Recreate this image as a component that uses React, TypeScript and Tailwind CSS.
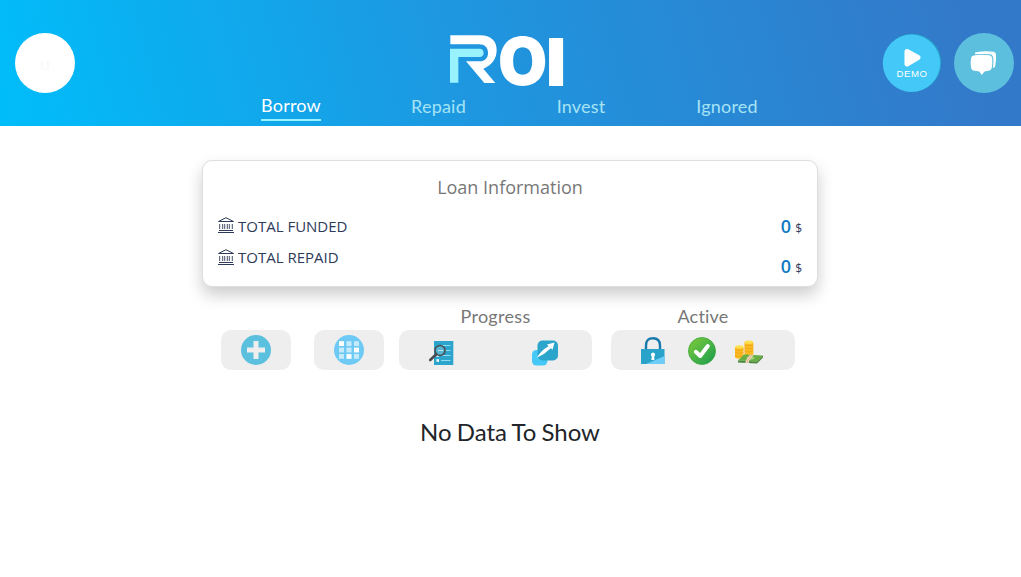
import React from "react";

function Logo() {
  return (
    <svg className="overflow-visible" width="150" height="80" viewBox="0 0 450 240" aria-label="ROI">
      <path d="M61 46H151C182 46 200 63 200 90C200 115 186 136 160 146L196 189H163L108 124H148C165 124 174 114 174 99C174 82 164 73 147 73H61Z" fill="#fff" />
      <path d="M60 188V86H149C165 86 165 111 149 111H85V188Z" fill="#98f2ff" />
      <text x="204" y="195" fontFamily="Inter, sans-serif" fontWeight="900" fontSize="196" textLength="148" lengthAdjust="spacingAndGlyphs" fill="#fff">O</text>
      <text x="347" y="197" fontFamily="Inter, sans-serif" fontWeight="900" fontSize="198" textLength="62" lengthAdjust="spacingAndGlyphs" fill="#fff">I</text>
    </svg>
  );
}

function DemoIcon() {
  return (
    <svg width="60" height="60" viewBox="0 0 60 60">
      <circle cx="30.3" cy="29.7" r="29" fill="#249fc8" />
      <circle cx="29.5" cy="30.3" r="28.7" fill="#44c8f7" />
      <path d="M25 18.500L36 24.500L25 31Z" fill="#fff" stroke="#fff" strokeWidth="5" strokeLinejoin="round" />
      <text x="14.500" y="43.700" fontFamily="Liberation Sans, sans-serif" fontSize="9.600" textLength="30.500" fill="#fff">DEMO</text>
    </svg>
  );
}

function ChatIcon() {
  return (
    <svg width="60" height="60" viewBox="0 0 60 60">
      <circle cx="30" cy="30" r="30" fill="#5dbfde" />
      <path d="M21 19.500Q31 17.200 39.500 18.800Q42 19.200 42 22Q42.300 28 41 34L38.800 35Q40 28 39 24Q38.500 21.500 36 21.300Q28 20.500 21 21.300Z" fill="#fff" />
      <path d="M19.500 22.500Q27 21.300 35 22.300Q38 22.700 38.200 25.500Q38.700 31 37.700 35Q37.200 37.700 34.500 37.800L30.500 38.500L27.800 42L25.300 38.500L20.500 37.800Q17.500 37.500 17 34.500Q16.200 30 17 25.500Q17.200 22.900 19.500 22.500Z" fill="#fff" />
    </svg>
  );
}

function BankIcon() {
  return (
    <svg width="16" height="16" viewBox="0 0 16 16" fill="none" stroke="#2e3a59">
      <path d="M.5 4.500L8 .7L15.500 4.500Z" strokeWidth="1" />
      <path d="M1.700 7V12M4.700 7V12M6.700 7V12M9.300 7V12M11.300 7V12M14.300 7V12" strokeWidth=".9" />
      <path d="M1 13.500H15M0 15.500H16" />
    </svg>
  );
}

function PlusIcon() {
  return (
    <svg width="30" height="30" viewBox="0 0 30 30">
      <circle cx="15" cy="15" r="15" fill="#5bc0de" />
      <path d="M15 6V24M6 15H24" stroke="#eee" strokeWidth="5" />
    </svg>
  );
}

const cells = ["#fff", "#c5eafc", "#c5eafc", "#c5eafc", "#c5eafc", "#fff", "#c5eafc", "#fff", "#c5eafc"];

function GridIcon() {
  return (
    <svg width="30" height="30" viewBox="0 0 30 30">
      <circle cx="15" cy="15" r="15" fill="#6ecaf5" />
      {cells.map((c, i) => (
        <rect key={i} x={5 + (i % 3) * 7.5} y={6.2 + Math.floor(i / 3) * 6.4} width="5" height="4.800" fill={c} />
      ))}
    </svg>
  );
}

function ReviewIcon() {
  return (
    <svg width="26" height="26" viewBox="0 0 26 26">
      <path d="M5 1H24.300V25H5Z" fill="#2ba5cb" />
      <path d="M12 5.500H21.500M15 10.500H21.500M12 15.500H21.500M12 20.500H21.500" stroke="#8fdcf2" strokeWidth="1" />
      <path d="M7.500 15.500H10M7.500 20.500H10" stroke="#fff" strokeWidth="2.500" />
      <circle cx="11" cy="10.500" r="5" fill="#54b6d3" stroke="#4b4b50" strokeWidth="1.600" />
      <path d="M9 10.500H14" stroke="#b8e5f1" />
      <path d="M7.300 14.200L1.200 20" stroke="#4b4b50" strokeWidth="2.600" strokeLinecap="round" />
    </svg>
  );
}

function ExportIcon() {
  return (
    <svg width="26" height="26" viewBox="0 0 26 26">
      <rect x="0" y="10" width="15.500" height="15.500" rx="4.500" fill="#46c9f7" />
      <rect x="5.500" y=".5" width="20.500" height="20" rx="5" fill="#2ba5cb" />
      <path d="M4.800 17.800Q9 10.500 16.500 6.300L15 4.500L22.500 2.500L20.500 9.800L18.800 8.200Q13 14 4.800 17.800Z" fill="#fff" />
    </svg>
  );
}

function LockIcon() {
  return (
    <svg width="24" height="28" viewBox="0 0 24 28">
      <path d="M5 13V8.500Q5 1.200 12 1.200Q19 1.200 19 8.500V13" fill="none" stroke="#1879ac" strokeWidth="2.400" />
      <path d="M0 12H23.500V27H0Z" fill="#2aa3ca" />
      <path d="M23.500 19L5 27H23.500Z" fill="#6ecdf6" />
      <path d="M12 15.500A2.200 2.200 0 0 1 13.200 19.500L13.400 23H10.300L10.800 19.500A2.200 2.200 0 0 1 12 15.500Z" fill="#fff" />
    </svg>
  );
}

function CheckIcon() {
  return (
    <svg width="28" height="28" viewBox="0 0 28 28">
      <defs>
        <linearGradient id="green" x1="0" y1="0" x2="1" y2="1">
          <stop offset=".1" stopColor="#78c83b" />
          <stop offset="1" stopColor="#159b50" />
        </linearGradient>
      </defs>
      <circle cx="14" cy="14" r="13.500" fill="url(#green)" stroke="#3ba63c" strokeWidth=".8" />
      <path d="M7.800 14.800L12.200 19L19.800 9" fill="none" stroke="#fff" strokeWidth="4" strokeLinecap="round" strokeLinejoin="round" />
    </svg>
  );
}

function MoneyIcon() {
  return (
    <svg width="28" height="24" viewBox="0 0 28 24">
      <path d="M0 7V17.500Q4 20 8.500 17.500V7Z" fill="#fbbb22" />
      <path d="M9.500 2V15H18.300V2Z" fill="#fbbb22" />
      <path d="M0 9.500Q4 11.500 8.500 9.500M0 12.500Q4 14.500 8.500 12.500M0 15.500Q4 17.500 8.500 15.500M9.500 5Q14 7 18.300 5M9.500 8Q14 10 18.300 8M9.500 11Q14 13 18.300 11" fill="none" stroke="#eb9e14" strokeWidth=".7" />
      <ellipse cx="4.250" cy="7" rx="4.250" ry="1.700" fill="#ffe04c" />
      <ellipse cx="13.900" cy="2.200" rx="4.400" ry="1.700" fill="#ffe04c" />
      <path d="M9 14.500L28 15.500L22 21.500L3 20.500Z" fill="#69ad45" />
      <path d="M3 20.500L22 21.500L28 15.500V17.500L22 23.500L3 22.500Z" fill="#4a8839" />
      <ellipse cx="15.500" cy="18" rx="4" ry="1.700" fill="#a4ce74" />
      <path d="M15 14.800L18.500 15L14 21.100V23L10.500 22.900V20.900Z" fill="#f0d9bc" />
      <path d="M16.800 14.900L12.300 21V23" fill="none" stroke="#d98b78" strokeWidth=".6" />
    </svg>
  );
}

function Amount() {
  return (
    <div className="flex h-10 items-baseline gap-1">
      <span className="text-[18px] font-semibold leading-6 text-[#117ac4]">0</span>
      <span className="text-[12px]">$</span>
    </div>
  );
}

export default function App() {
  return (
    <div className="min-h-[577px] bg-white font-['Lato',sans-serif]">
      <header className="h-[126px] bg-[linear-gradient(75deg,#00bdfa_0%,#1e97e0_45%,#3379c9_94%,#3379c9_100%)]">
        <div className="flex h-[93px] items-end pl-[15px]">
          <div className="mr-[355px] flex size-[60px] items-center justify-center rounded-full bg-white text-[18px] text-[#f8f9fa]">u</div>
          <div className="mb-[-7px] mr-[302px] h-20 w-[150px]"><Logo /></div>
          <div className="flex gap-3">
            <DemoIcon />
            <ChatIcon />
          </div>
        </div>
        <nav className="flex pl-[219px] text-[18px] leading-[26px] tracking-[0.2px] text-[#a5e3f5]">
          <div className="flex w-[144px] justify-center"><span className="h-7 border-b-2 border-[#98f2ff] leading-6 text-white">Borrow</span></div>
          <span className="w-[151px] text-center">Repaid</span>
          <span className="w-[134px] text-center">Invest</span>
          <span className="w-[158px] text-center">Ignored</span>
        </nav>
      </header>
      <main>
        <section className="ml-[202px] mt-[34px] h-[127px] w-[616px] rounded-[10px] border border-[#dedede] bg-white px-[15px] font-['Open_Sans',sans-serif] text-[#2e3a59] shadow-[0_8px_16px_rgba(0,0,0,0.2)]">
          <h2 className="pt-[14px] text-center text-[18px] leading-6 text-[#777]">Loan Information</h2>
          <div className="flex justify-between pt-[18px]">
            <div className="text-[15px] leading-5">
              <div className="flex h-[31px] gap-1"><BankIcon /><span className="-mt-px">TOTAL FUNDED</span></div>
              <div className="flex h-[31px] gap-1"><div className="pt-px"><BankIcon /></div><span className="-mt-px">TOTAL REPAID</span></div>
            </div>
            <div className="-mt-[3px]"><Amount /><Amount /></div>
          </div>
        </section>
        <div className="mt-[19px] flex items-end pl-[221px]">
          <div className="mr-[23px] flex h-10 w-[70px] items-center justify-center rounded-[10px] bg-[#eee]"><PlusIcon /></div>
          <div className="mr-[15px] flex h-10 w-[70px] items-center justify-center rounded-[10px] bg-[#eee]"><GridIcon /></div>
          <div className="mr-[19px] w-[193px]">
            <h3 className="h-6 text-center text-[18px] leading-5 tracking-[0.3px] text-[#777]">Progress</h3>
            <div className="flex h-10 gap-[77px] rounded-[10px] bg-[#eee] pl-[30px] pt-[10px]">
              <ReviewIcon /><ExportIcon />
            </div>
          </div>
          <div className="w-[184px]">
            <h3 className="h-6 text-center text-[18px] leading-5 tracking-[0.2px] text-[#777]">Active</h3>
            <div className="flex h-10 items-start rounded-[10px] bg-[#eee] pl-[30px] pt-[7px]">
              <LockIcon />
              <div className="ml-[23px]"><CheckIcon /></div>
              <div className="ml-[19px] mt-[3px]"><MoneyIcon /></div>
            </div>
          </div>
        </div>
        <p className="mt-[46px] pr-px text-center text-[24px] leading-[32px] text-[#212529] [word-spacing:-1px]">No Data To Show</p>
      </main>
    </div>
  );
}
